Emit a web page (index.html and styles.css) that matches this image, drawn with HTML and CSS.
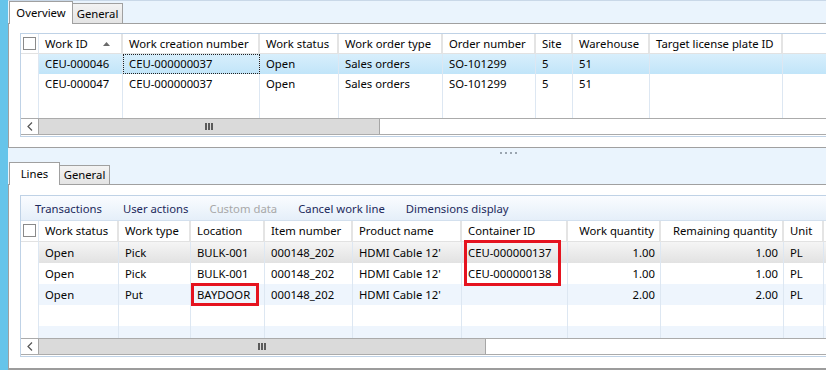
FILE: index.html
```html
<!DOCTYPE html>
<html>
<head>
<meta charset="utf-8">
<link rel="stylesheet" href="styles.css">
</head>
<body>
<div class="app">
  <div class="rail"></div>
  <div class="main">
    <div class="tabs tabs-top">
      <div class="tab active w-overview">Overview</div>
      <div class="tab w-general">General</div>
    </div>
    <div class="panel panel-top">
      <div class="grid grid-top">
        <div class="grid-body">
          <div class="row hdr">
            <div class="c chk"><span class="cb"></span></div>
            <div class="c sortable">Work ID<svg class="sort" width="7" height="4" viewBox="0 0 7 4"><polygon points="0,4 3.5,0 7,4" fill="#6a6a6a"/></svg></div>
            <div class="c">Work creation number</div>
            <div class="c">Work status</div>
            <div class="c">Work order type</div>
            <div class="c">Order number</div>
            <div class="c">Site</div>
            <div class="c">Warehouse</div>
            <div class="c">Target license plate ID</div>
            <div class="c last"></div>
          </div>
          <div class="row sel">
            <div class="c chk"></div>
            <div class="c">CEU-000046</div>
            <div class="c focus">CEU-000000037</div>
            <div class="c">Open</div>
            <div class="c">Sales orders</div>
            <div class="c">SO-101299</div>
            <div class="c">5</div>
            <div class="c">51</div>
            <div class="c"></div>
            <div class="c last"></div>
          </div>
          <div class="row">
            <div class="c chk"></div>
            <div class="c">CEU-000047</div>
            <div class="c">CEU-000000037</div>
            <div class="c">Open</div>
            <div class="c">Sales orders</div>
            <div class="c">SO-101299</div>
            <div class="c">5</div>
            <div class="c">51</div>
            <div class="c"></div>
            <div class="c last"></div>
          </div>
          <div class="row fill">
            <div class="c chk"></div><div class="c"></div><div class="c"></div><div class="c"></div><div class="c"></div><div class="c"></div><div class="c"></div><div class="c"></div><div class="c"></div><div class="c last"></div>
          </div>
        </div>
        <div class="hscroll">
          <div class="sb-btn"><svg width="6" height="9" viewBox="0 0 6 9"><polyline points="5,0.5 1,4.5 5,8.5" fill="none" stroke="#555" stroke-width="1.2"/></svg></div>
          <div class="sb-thumb thumb-top"><span class="grip"><i></i><i></i><i></i></span></div>
        </div>
      </div>
    </div>
    <div class="splitter"><i></i><i></i><i></i><i></i></div>
    <div class="tabs tabs-bottom">
      <div class="tab active w-lines">Lines</div>
      <div class="tab w-general2">General</div>
    </div>
    <div class="panel panel-bottom">
      <div class="grid grid-bottom">
        <div class="toolbar">
          <span class="tb">Transactions</span>
          <span class="tb">User actions</span>
          <span class="tb disabled">Custom data</span>
          <span class="tb">Cancel work line</span>
          <span class="tb">Dimensions display</span>
        </div>
        <div class="grid-body">
          <div class="row hdr">
            <div class="c chk"><span class="cb"></span></div>
            <div class="c">Work status</div>
            <div class="c">Work type</div>
            <div class="c">Location</div>
            <div class="c">Item number</div>
            <div class="c">Product name</div>
            <div class="c">Container ID</div>
            <div class="c num">Work quantity</div>
            <div class="c num">Remaining quantity</div>
            <div class="c">Unit</div>
            <div class="c last"></div>
          </div>
          <div class="row cur">
            <div class="c chk"></div>
            <div class="c">Open</div>
            <div class="c">Pick</div>
            <div class="c">BULK-001</div>
            <div class="c">000148_202</div>
            <div class="c">HDMI Cable 12'</div>
            <div class="c">CEU-000000137</div>
            <div class="c num">1.00</div>
            <div class="c num">1.00</div>
            <div class="c">PL</div>
            <div class="c last"></div>
          </div>
          <div class="row">
            <div class="c chk"></div>
            <div class="c">Open</div>
            <div class="c">Pick</div>
            <div class="c">BULK-001</div>
            <div class="c">000148_202</div>
            <div class="c">HDMI Cable 12'</div>
            <div class="c">CEU-000000138</div>
            <div class="c num">1.00</div>
            <div class="c num">1.00</div>
            <div class="c">PL</div>
            <div class="c last"></div>
          </div>
          <div class="row alt">
            <div class="c chk"></div>
            <div class="c">Open</div>
            <div class="c">Put</div>
            <div class="c">BAYDOOR</div>
            <div class="c">000148_202</div>
            <div class="c">HDMI Cable 12'</div>
            <div class="c"></div>
            <div class="c num">2.00</div>
            <div class="c num">2.00</div>
            <div class="c">PL</div>
            <div class="c last"></div>
          </div>
          <div class="row">
            <div class="c chk"></div><div class="c"></div><div class="c"></div><div class="c"></div><div class="c"></div><div class="c"></div><div class="c"></div><div class="c"></div><div class="c"></div><div class="c"></div><div class="c last"></div>
          </div>
          <div class="row alt fill">
            <div class="c chk"></div><div class="c"></div><div class="c"></div><div class="c"></div><div class="c"></div><div class="c"></div><div class="c"></div><div class="c"></div><div class="c"></div><div class="c"></div><div class="c last"></div>
          </div>
          <div class="mark mark-container"></div>
          <div class="mark mark-location"></div>
        </div>
        <div class="hscroll">
          <div class="sb-btn"><svg width="6" height="9" viewBox="0 0 6 9"><polyline points="5,0.5 1,4.5 5,8.5" fill="none" stroke="#555" stroke-width="1.2"/></svg></div>
          <div class="sb-thumb thumb-bottom"><span class="grip"><i></i><i></i><i></i></span></div>
        </div>
      </div>
    </div>
  </div>
</div>
</body>
</html>
```

FILE: styles.css
```css
* { box-sizing: border-box; }
html, body { margin: 0; padding: 0; }
body {
  width: 826px;
  height: 370px;
  overflow: hidden;
  font-family: "Noto Sans", "Segoe UI", sans-serif;
  font-size: 11.3px;
  color: #050505;
  background: #fff;
}
.app { display: flex; height: 370px; }
.rail { width: 8px; flex: none; background: #66C4EA; }
.main {
  flex: 1;
  min-width: 0;
  display: flex;
  flex-direction: column;
  background: #EAF4FD;
}

/* tabs */
.tabs {
  display: flex;
  align-items: flex-end;
  flex: none;
  padding-left: 1px;
  border-bottom: 1px solid #A0A0A0;
}
.tabs-top { height: 24px; border-top: 1px solid #C9D8E8; }
.tabs-bottom { height: 23px; }
.tab {
  height: 20px;
  line-height: 19px;
  border: 1px solid #A0A0A0;
  border-bottom: none;
  background: linear-gradient(#F3F3F3, #E4E4E4);
  text-align: center;
  margin-left: -1px;
}
.tabs-bottom .tab { height: 19px; line-height: 18px; }
.tab.active, .tabs-bottom .tab.active {
  height: 23px;
  margin-bottom: -1px;
  margin-left: 0;
  background: #fff;
  line-height: 22px;
  position: relative;
}
.w-overview { width: 64px; }
.w-general { width: 51px; }
.w-lines { width: 51px; }
.w-general2 { width: 51px; }

/* panels */
.panel { background: #fff; border-left: 1px solid #A0A0A0; flex: none; }
.panel-top {
  height: 124px;
  padding: 9px 0 10px 11px;
  border-bottom: 1px solid #A0A0A0;
}
.panel-bottom {
  flex: 1;
  padding: 10px 0 11px 11px;
  border-bottom: 2px solid #9C9C9C;
}

/* splitter */
.splitter {
  height: 14px;
  flex: none;
  display: flex;
  gap: 3px;
  padding: 4px 0 0 492px;
}
.splitter i { width: 2px; height: 2px; background: #9AA5B0; }

/* grid */
.grid {
  border: 1px solid #BFD2E6;
  border-right: none;
  padding-bottom: 1px;
  background: #fff;
}
.grid-body {
  position: relative;
  overflow: hidden;
  display: flex;
  flex-direction: column;
}
.grid-top .grid-body { height: 84px; }
.grid-bottom .grid-body { height: 117px; }

.row { display: grid; height: 21px; flex: none; }
.row.fill { flex: 1; height: auto; }
.grid-top .row { grid-template-columns: 18px 84px 137px 79px 104px 93px 37px 77px 133px 1fr; height: 20px; }
.grid-top .row.fill { height: auto; }
.grid-bottom .row { grid-template-columns: 18px 80px 72px 74px 88px 109px 106px 93px 123px 40px 1fr; }

.c {
  border-right: 1px solid #DDE7F2;
  padding: 0 5px 0 6px;
  line-height: 21px;
  white-space: nowrap;
  overflow: hidden;
}
.grid-top .c { line-height: 20px; }
.c.last { border-right: none; }
.hdr .c {
  border-right: 2px solid #E4E4E4;
  border-bottom: 1px solid #E2E2E2;
  line-height: 19px;
  background: #fff;
}
.grid-top .hdr .c { line-height: 19px; }
.grid-bottom .hdr .c { line-height: 20px; }
.hdr .c.last { border-right: none; }
.num { text-align: right; padding-right: 5px; }
.hdr .chk { padding: 3px 0 0 2px; border-right: 1px solid #DDE7F2; }
.cb {
  display: block;
  width: 13px;
  height: 13px;
  border: 1px solid #8A8A8A;
  background: #fff;
}
.sortable { display: flex; align-items: center; }
.sort { margin-left: auto; margin-right: 6px; }

.row.sel .c:not(.chk) { background: linear-gradient(#D8EFFC, #C1E5F9); }
.row.cur .c:not(.chk) { background: linear-gradient(#F5F5F5, #E2E2E2); }
.row.alt .c:not(.chk) { background: #EEF5FD; }
.focus { outline: 1px dotted #222; outline-offset: -1px; }

/* toolbar */
.toolbar {
  height: 25px;
  display: flex;
  align-items: center;
  gap: 21px;
  padding-left: 14px;
  background: linear-gradient(#FAFCFF, #E5EFF9);
  border-bottom: 1px solid #D3E0EE;
  color: #1D2A5C;
}
.tb.disabled { color: #A8A8A8; }

/* scrollbar */
.hscroll {
  height: 17px;
  display: flex;
  border-top: 1px solid #ABABAB;
  border-bottom: 1px solid #ABABAB;
  background: #fff;
}
.sb-btn {
  width: 17px;
  flex: none;
  display: flex;
  align-items: center;
  justify-content: center;
}
.sb-thumb {
  flex: none;
  background: #DADADA;
  border-left: 1px solid #A6A6A6;
  border-right: 1px solid #A6A6A6;
  display: flex;
  align-items: center;
  justify-content: center;
}
.thumb-top { width: 342px; }
.thumb-bottom { width: 448px; }
.grip { display: flex; gap: 1px; height: 7px; }
.grip i { width: 2px; background: #5A5A5A; }

/* annotations */
.mark { position: absolute; border: 3px solid #E5131F; }
.mark-container { left: 443px; top: 19px; width: 97px; height: 46px; }
.mark-location { left: 170px; top: 62px; width: 68px; height: 23px; }
```
